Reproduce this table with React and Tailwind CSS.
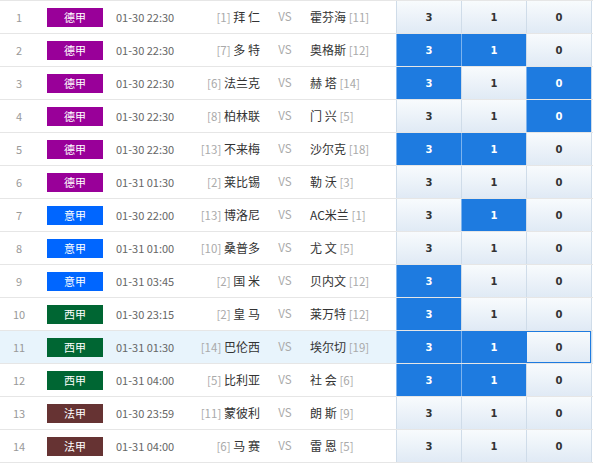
import React from 'react';

const LEAGUES = {
  德甲: 'bg-[#990099]',
  意甲: 'bg-[#0066ff]',
  西甲: 'bg-[#006633]',
  法甲: 'bg-[#663333]',
};

// picks: which of [3, 1, 0] are selected
const MATCHES = [
  ['德甲', '01-30 22:30', '[1]', '拜 仁', '霍芬海', '[11]', [0, 0, 0]],
  ['德甲', '01-30 22:30', '[7]', '多 特', '奥格斯', '[12]', [1, 1, 0]],
  ['德甲', '01-30 22:30', '[6]', '法兰克', '赫 塔', '[14]', [1, 0, 1]],
  ['德甲', '01-30 22:30', '[8]', '柏林联', '门 兴', '[5]', [0, 0, 1]],
  ['德甲', '01-30 22:30', '[13]', '不来梅', '沙尔克', '[18]', [1, 1, 0]],
  ['德甲', '01-31 01:30', '[2]', '莱比锡', '勒 沃', '[3]', [0, 0, 0]],
  ['意甲', '01-30 22:00', '[13]', '博洛尼', 'AC米兰', '[1]', [0, 1, 0]],
  ['意甲', '01-31 01:00', '[10]', '桑普多', '尤 文', '[5]', [0, 0, 0]],
  ['意甲', '01-31 03:45', '[2]', '国 米', '贝内文', '[12]', [1, 0, 0]],
  ['西甲', '01-30 23:15', '[2]', '皇 马', '莱万特', '[12]', [1, 0, 0]],
  ['西甲', '01-31 01:30', '[14]', '巴伦西', '埃尔切', '[19]', [1, 1, 0]],
  ['西甲', '01-31 04:00', '[5]', '比利亚', '社 会', '[6]', [1, 1, 0]],
  ['法甲', '01-30 23:59', '[11]', '蒙彼利', '朗 斯', '[9]', [0, 0, 0]],
  ['法甲', '01-31 04:00', '[6]', '马 赛', '雷 恩', '[5]', [0, 0, 0]],
];

const HOVER_ROW = 10;

function ScoreCell({ value, on, outlined }) {
  const base =
    'w-[65px] h-full flex items-center justify-center text-[10px] font-bold border-l font-["DejaVu_Sans",sans-serif]';
  if (on) {
    return <div className={`${base} bg-[#1e7be0] text-white border-[#7db3ee]`}>{value}</div>;
  }
  return (
    <div
      className={`${base} bg-gradient-to-b from-[#f8fbfd] to-[#e0eaf5] text-[#333] border-[#cfdce9] ${
        outlined ? 'outline outline-1 outline-[#1e7be0] -outline-offset-1' : ''
      }`}
    >
      {value}
    </div>
  );
}

export default function App() {
  return (
    <div
      className="w-[593px] h-[464px] bg-white border-t border-[#e6e6e6] overflow-hidden"
      style={{ fontFamily: '"Microsoft YaHei", "Noto Sans CJK SC", sans-serif' }}
    >
      {MATCHES.map(([league, date, hr, home, away, ar, picks], i) => (
        <div
          key={i}
          className={`flex items-center h-[33px] border-b border-[#e6e6e6] ${
            i === HOVER_ROW ? 'bg-[#e8f4fc]' : ''
          }`}
        >
          <div className="w-[38px] text-center text-[11px] text-[#999]">{i + 1}</div>
          <div className="pl-[9px]">
            <div
              className={`w-[56px] h-[19px] flex items-center justify-center text-[11px] text-white ${LEAGUES[league]}`}
            >
              {league}
            </div>
          </div>
          <div className="ml-[13px] w-[80px] text-[11px] text-[#666]">{date}</div>
          <div className="w-[64px] text-right text-[12px] text-[#333] whitespace-nowrap">
            <span className="text-[11.5px] text-[#aaa]">{hr}</span> {home}
          </div>
          <div className="w-[50px] text-center text-[11.5px] text-[#aaa]">VS</div>
          <div className="w-[86px] text-[12px] text-[#333] whitespace-nowrap">
            {away} <span className="text-[11.5px] text-[#aaa]">{ar}</span>
          </div>
          <div className="flex h-full border-r border-[#cfdce9]">
            {['3', '1', '0'].map((v, k) => (
              <ScoreCell
                key={v}
                value={v}
                on={picks[k] === 1}
                outlined={i === HOVER_ROW && k === 2}
              />
            ))}
          </div>
        </div>
      ))}
    </div>
  );
}
